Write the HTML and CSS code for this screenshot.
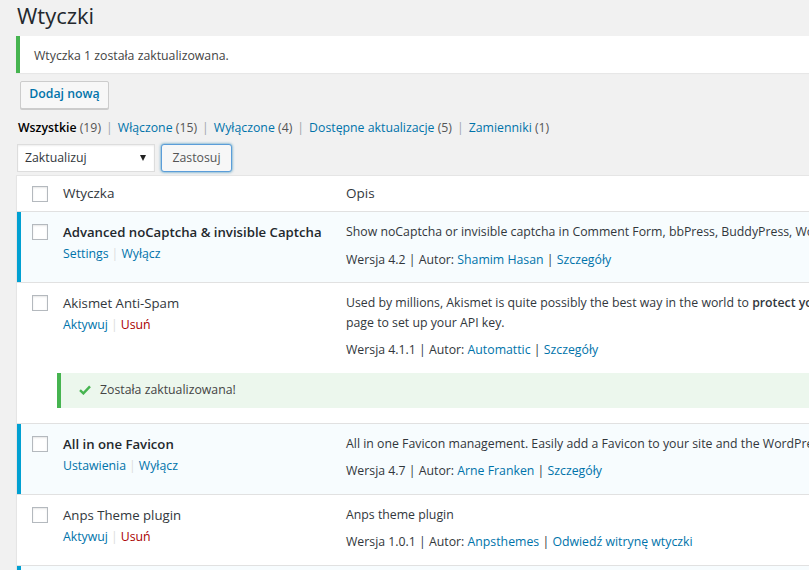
FILE: index.html
```html
<!DOCTYPE html>
<html lang="pl">
<head>
<meta charset="utf-8">
<title>Wtyczki</title>
<link rel="stylesheet" href="styles.css">
</head>
<body>
<div class="wrap">
  <h1 class="page-title">Wtyczki</h1>
  <div class="notice"><p>Wtyczka 1 została zaktualizowana.</p></div>
  <div class="title-actions"><a class="btn add-new" href="#">Dodaj nową</a></div>

  <ul class="filters">
    <li><a class="current" href="#">Wszystkie <span class="count">(19)</span></a><span class="sep">|</span></li>
    <li><a href="#">Włączone <span class="count">(15)</span></a><span class="sep">|</span></li>
    <li><a href="#">Wyłączone <span class="count">(4)</span></a><span class="sep">|</span></li>
    <li><a href="#">Dostępne aktualizacje <span class="count">(5)</span></a><span class="sep">|</span></li>
    <li><a href="#">Zamienniki <span class="count">(1)</span></a></li>
  </ul>

  <div class="bulk">
    <div class="select"><span>Zaktualizuj</span><span class="arrow"></span></div>
    <button class="btn apply" type="button">Zastosuj</button>
  </div>

  <div class="plugins">
    <div class="row head">
      <div class="cell check"><span class="cb"></span></div>
      <div class="cell name">Wtyczka</div>
      <div class="cell desc">Opis</div>
    </div>

    <div class="row active">
      <div class="cell check"><span class="cb"></span></div>
      <div class="cell name">
        <strong class="title">Advanced noCaptcha &amp; invisible Captcha</strong>
        <div class="actions"><a href="#">Settings</a><span class="sep">|</span><a href="#">Wyłącz</a></div>
      </div>
      <div class="cell desc">
        <p class="text">Show noCaptcha or invisible captcha in Comment Form, bbPress, BuddyPress, WooCommerce, Contact Form 7 and many more</p>
        <p class="meta">Wersja 4.2 | Autor: <a href="#">Shamim Hasan</a> | <a href="#">Szczegóły</a></p>
      </div>
    </div>

    <div class="row inactive has-update">
      <div class="cell check"><span class="cb"></span></div>
      <div class="cell name">
        <span class="title">Akismet Anti-Spam</span>
        <div class="actions"><a href="#">Aktywuj</a><span class="sep">|</span><a class="delete" href="#">Usuń</a></div>
      </div>
      <div class="cell desc">
        <p class="text">Used by millions, Akismet is quite possibly the best way in the world to <strong>protect your blog from spam</strong>. It keeps your site protected even while you sleep. To get started: activate the Akismet plugin and then go to your Akismet Settings<br>page to set up your API key.</p>
        <p class="meta">Wersja 4.1.1 | Autor: <a href="#">Automattic</a> | <a href="#">Szczegóły</a></p>
      </div>
    </div>

    <div class="update-row">
      <div class="update-notice">
        <svg class="yes" width="12" height="10" viewBox="0 0 12 10"><path d="M1 5.2 L4.4 8.4 L11 1.4" fill="none" stroke="#46b450" stroke-width="2.4"/></svg>
        <span>Została zaktualizowana!</span>
      </div>
    </div>

    <div class="row active">
      <div class="cell check"><span class="cb"></span></div>
      <div class="cell name">
        <strong class="title">All in one Favicon</strong>
        <div class="actions"><a href="#">Ustawienia</a><span class="sep">|</span><a href="#">Wyłącz</a></div>
      </div>
      <div class="cell desc">
        <p class="text">All in one Favicon management. Easily add a Favicon to your site and the WordPress admin pages. Complete with upload functionality.</p>
        <p class="meta">Wersja 4.7 | Autor: <a href="#">Arne Franken</a> | <a href="#">Szczegóły</a></p>
      </div>
    </div>

    <div class="row inactive">
      <div class="cell check"><span class="cb"></span></div>
      <div class="cell name">
        <span class="title">Anps Theme plugin</span>
        <div class="actions"><a href="#">Aktywuj</a><span class="sep">|</span><a class="delete" href="#">Usuń</a></div>
      </div>
      <div class="cell desc">
        <p class="text">Anps theme plugin</p>
        <p class="meta">Wersja 1.0.1 | Autor: <a href="#">Anpsthemes</a> | <a href="#">Odwiedź witrynę wtyczki</a></p>
      </div>
    </div>

    <div class="row active">
      <div class="cell check"><span class="cb"></span></div>
      <div class="cell name">
        <strong class="title">Breadcrumb NavXT</strong>
        <div class="actions"><a href="#">Ustawienia</a><span class="sep">|</span><a href="#">Wyłącz</a></div>
      </div>
      <div class="cell desc">
        <p class="text">Adds a breadcrumb navigation showing the visitor's path to their current location.</p>
        <p class="meta">Wersja 6.2.1 | Autor: <a href="#">John Havlik</a> | <a href="#">Szczegóły</a></p>
      </div>
    </div>
  </div>
</div>
</body>
</html>
```

FILE: styles.css
```css
html, body {
  margin: 0;
  padding: 0;
  overflow: hidden;
  background: #f1f1f1;
}

body {
  font-family: "Open Sans", "Noto Sans", "Liberation Sans", sans-serif;
  font-size: 12.3px;
  line-height: 1.5;
  color: #444;
}

a {
  color: #0073aa;
  text-decoration: none;
}

.wrap {
  width: 1130px;
  padding-left: 16px;
}

.page-title {
  margin: 0;
  padding: 1px 0 0 1px;
  font-size: 22px;
  line-height: 29px;
  font-weight: 400;
  color: #23282d;
}

.notice {
  margin-top: 6px;
  background: #fff;
  border-left: 4px solid #46b450;
  box-shadow: 0 1px 1px rgba(0, 0, 0, 0.04);
}

.notice p {
  margin: 0;
  padding: 10px 14px 8px;
  line-height: 19px;
  color: #444;
}

.title-actions {
  margin-top: 8px;
  padding-left: 4px;
  display: flex;
}

.btn {
  display: inline-flex;
  align-items: center;
  box-sizing: border-box;
  height: 28px;
  padding: 0 9px 1px;
  border: 1px solid #ccc;
  border-radius: 3px;
  background: #f7f7f7;
  box-shadow: 0 1px 0 #ccc;
  font-family: inherit;
  font-size: 12.3px;
  white-space: nowrap;
}

.add-new {
  color: #0073aa;
  font-weight: 600;
  border-radius: 2px;
  width: 89px;
  justify-content: center;
  padding: 0 0 1px;
}

.filters {
  list-style: none;
  margin: 9px 0 0;
  padding: 0 0 0 2px;
  display: flex;
  line-height: 20px;
  color: #666;
}

.filters a.current {
  color: #000;
  font-weight: 600;
}

.filters .count {
  color: #555;
  font-weight: 400;
}

.filters .sep {
  color: #a0a5aa;
  padding: 0 5px;
}

.bulk {
  margin-top: 6px;
  display: flex;
  gap: 6px;
  padding-left: 1px;
}

.select {
  box-sizing: border-box;
  width: 138px;
  height: 28px;
  display: flex;
  align-items: center;
  justify-content: space-between;
  padding: 0 6px 0 7px;
  background: #fff;
  border: 1px solid #ddd;
  box-shadow: inset 0 1px 2px rgba(0, 0, 0, 0.07);
  color: #32373c;
}

.select .arrow {
  width: 0;
  height: 0;
  border-left: 3.5px solid transparent;
  border-right: 3.5px solid transparent;
  border-top: 6px solid #222;
  margin-right: 2px;
}

.apply {
  width: 71px;
  justify-content: center;
  color: #555;
  border-color: #5b9dd9;
  box-shadow: 0 0 3px rgba(0, 115, 170, 0.8);
}

.plugins {
  margin-top: 3px;
  background: #fff;
  border: 1px solid #e5e5e5;
  border-right: 0;
  box-shadow: 0 1px 1px rgba(0, 0, 0, 0.04);
}

.row {
  display: grid;
  grid-template-columns: 36px 283px 1fr;
  border-bottom: 1px solid #e1e1e1;
}

.row.head {
  height: 35px;
  align-items: center;
}

.row.head .cell {
  font-size: 13.5px;
  color: #32373c;
  padding-top: 0;
  padding-bottom: 0;
}

.row.head .check {
  display: flex;
  align-items: center;
}

.row.head .desc {
  padding-left: 10px;
}

.cell {
  padding: 10px 10px 13px;
  min-width: 0;
}

.check {
  padding: 10px 0 0 15px;
  box-sizing: border-box;
}

.cb {
  display: block;
  box-sizing: border-box;
  width: 16px;
  height: 16px;
  border: 1px solid #b4b9be;
  background: #fff;
  box-shadow: inset 0 1px 2px rgba(0, 0, 0, 0.1);
}

.row .check .cb {
  margin-top: 2px;
}

.row.head .check .cb {
  margin-top: 1px;
}

.row.active {
  background: #f7fcfe;
}

.row.active .check {
  border-left: 4px solid #00a0d2;
  padding-left: 11px;
}

.title {
  display: block;
  font-size: 13.2px;
  line-height: 20px;
  color: #32373c;
  white-space: nowrap;
}

strong.title {
  font-weight: 600;
  color: #23282d;
}

.actions {
  padding-top: 2px;
  line-height: 19.5px;
  white-space: nowrap;
}

.actions .sep {
  color: #ddd;
  padding: 0 3px;
}

.actions .delete {
  color: #a00;
}

.desc .text {
  margin: 0;
  line-height: 19.5px;
  color: #32373c;
  white-space: nowrap;
}

.desc .text strong {
  font-weight: 600;
}

.desc .meta {
  margin: 8px 0 0;
  line-height: 19.5px;
  color: #32373c;
  white-space: nowrap;
}

.row.has-update {
  border-bottom: 0;
}

.row.has-update .cell {
  padding-bottom: 0;
}

.update-row {
  padding: 13px 0 15px 40px;
  border-bottom: 1px solid #e1e1e1;
}

.update-notice {
  height: 35px;
  display: flex;
  align-items: center;
  gap: 9px;
  padding-left: 18px;
  background: #ecf7ed;
  border-left: 4px solid #46b450;
  color: #444;
}

.update-notice .yes {
  display: block;
}
```
